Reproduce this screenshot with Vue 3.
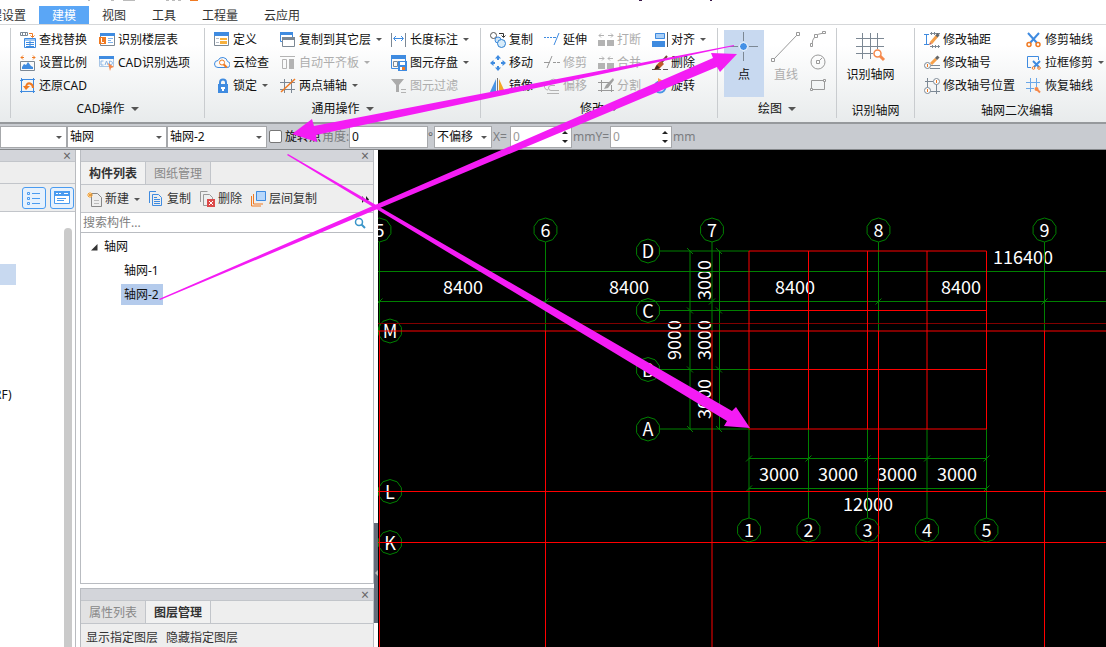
<script setup>
import { ref } from 'vue'

const B = '#3f8be0'
const O = '#f07a22'
const G = '#7c8894'
const D = '#b3b3b3'

const s = (d, c, w = 1) => `<path d="${d}" fill="none" stroke="${c}" stroke-width="${w}"/>`
const f = (d, c) => `<path d="${d}" fill="${c}"/>`

const icons = {
  findReplace:
    s('M.5 .5h7v3h-7zM2.5 .5v3M5.5 .5v3', G) + s('M9 1.5h3.5V5M10.5 3.5l2 2 2-2', O) +
    s('M4.500 6.500h11v9h-11z', B) + f('M5 7h10v2H5z', '#9cc5f2') + s('M6 10.500h8M6 12.500h8M6 14.500h8M10 9v6', B),
  floorTable:
    s('M1.500 1.500h14v12h-14z', G) + f('M1 1h15v3H1z', B) + f('M0 5h7v7H0z', O) + s('M2.500 6v4.500H5', '#fff') +
    s('M9 6.500h5M9 8.500h3M9 10.500h5', '#7fb2ec'),
  scale:
    s('M4 2.500H1M12 2.500h3M3 .5l-2 2 2 2M13 .5l2 2-2 2', O) + s('M.5 6.500h14v9H.5z', G) +
    f('M2 14v-2l2-3 2 1 2-3 3 4 2 1v2z', B),
  cadOption:
    s('M.5 1.500h14v10H.5z', '#a9c6e6') + f('M0 1h15v3H0z', B) +
    s('M4.500 6H2v4h2.500M6 10l1.500-4L9 10M10.500 6v4q3 0 3-2t-3-2', '#8ab5e6') + f('M9 8l6 4-3 1-1 3z', '#f5884a'),
  restoreCad:
    s('M1.500 1.500h12v12h-12z', B) + s('M0 2.500h3M1.500 0v3M13.500 0v3M12 1.500h3M0 13.500h3M1.500 12v3M15 13.500h-3M13.500 12v3', B) +
    s('M6 10C6 6 8 5 10 5.500q3 1 3 4.500', O, 2) + f('M3 8h7l-4 4z', O),
  define:
    s('M.5 1.500h14v12H.5z', G) + f('M0 0h15v4H0z', B) + s('M2 6.500h3M2 10.500h3M7 10.500h6', '#b5bcc5') + f('M6 6h7v6H6z', '#f7b03c') + s('M6 8.500h7', '#fff'),
  cloudCheck:
    s('M4 12.500a3.500 3.500 0 0 1 0-7 5 5 0 0 1 9.500 1 3 3 0 0 1-1 6z', B) + '<circle cx="8" cy="7.500" r="2.500" fill="#fff" stroke="#f07a22"/>' + s('M9.800 9.500l3 3', O, 2),
  lock:
    s('M6 7V4.500a3 3 0 0 1 6 0V7', B, 2) + f('M4 6h10v9H4z', B) + f('M8 9h2v4H8zM7 9h4v2H7z', '#fff'),
  copyFloor:
    s('M.5 .5h12v9H.5z', B) + f('M0 0h13v3H0z', B) + f('M2 5h14v10H2z', '#fff') + s('M2.500 5.500h12v9h-12z', G) + f('M2 5h13v3H2z', G),
  alignSlab: s('M0 1.500h15M2.500 4.500h4v9h-4z', D) + f('M9 4h5v10H9z', D),
  twoPoint: s('M4.500 1v14M11.500 1v14M0 4.500h15M0 11.500h15', G) + s('M1 14L15 1', O, 1.5),
  length: s('M.5 1v14M14.500 1v14', G) + s('M3 6.500h9M5 4L2.500 6.500 5 9M10 4l2.500 2.500L10 9', B),
  saveEl:
    s('M.5 1.500h14v12H.5z', B) + f('M0 0h15v4H0z', B) + s('M2.500 6.500h4v5h-4z', G) + f('M7 6h9v10H7z', B) + f('M9 7h5v3H9z', '#fff') + f('M9 12h5v3H9z', '#fff') + f('M11 12h3v3h-3z', O),
  filter: f('M0 1h13L8 7v7H5V7z', '#ababab') + s('M10 11.500h5M10 14.500h5', D),
  copy:
    '<circle cx="3.500" cy="3.500" r="3" fill="#fff" stroke="#555"/><circle cx="8" cy="8" r="3" fill="#cfe6f7" stroke="#3f8be0"/><circle cx="11.500" cy="11.500" r="4" fill="#d8ecfa" stroke="#2c7fd0"/>' +
    s('M9 1.500h4.500V5M11.500 3.500l2 2 2-2', '#333'),
  move:
    s('M8 1v4M8 11v4M1 8h4M11 8h4', B, 2) + f('M8 0l3 3.500H5zM8 16l3-3.500H5zM0 8l3.500-3v6zM16 8l-3.500-3v6z', B),
  mirror: f('M6 1v13H0z', '#4a94e4') + f('M9 1v13h6z', '#f5a623') + s('M7.500 0v16', '#777'),
  extend: s('M0 5.500h8', B).replace('/>', ' stroke-dasharray="2 1"/>') + s('M9 5.500h3M10 13L15 1', B),
  trim: s('M0 7.500h6M3 13L8 1', '#999') + s('M9 7.500h7', '#999').replace('/>', ' stroke-dasharray="3 1"/>'),
  offset: s('M4 12a4 4 0 0 1 1-8 5 5 0 0 1 9 0', D) + s('M7 12.500a2.500 2.500 0 0 1 0-5h4M3 15.500h12M7 12.500h8', D),
  breakIt: f('M0 8h7v6H0zM9 8h7v6H9z', D) + s('M1 3.500h5M3 1.500l-2 2 2 2M10 3.500h5M13 1.500l2 2-2 2', D),
  merge: f('M0 8h7v6H0zM9 8h7v6H9z', D) + s('M1 3.500h5M4 1.500l2 2-2 2M10 3.500h5M12 1.500l-2 2 2 2', D),
  split: s('M0 4.500h12M3.500 2v12M0 12.500h16M13.500 7v7', '#999') + f('M15 0l1 2-6 8-4 1 2-4z', '#a0a0a0'),
  align: f('M3 1h10v6H3z', '#a9cff7') + s('M3.500 1.500h9v5h-9z', B) + f('M0 9h13v6H0z', '#3f8be0') + s('M15.500 0v15', '#555'),
  del: s('M0 14.500h9M11 14.500h5', '#555') + s('M15 1L9 8', '#6b4a32', 2) + f('M9 6l3 3-5 5-5 1q2-6 7-9z', '#c05a28') + f('M5 10l3 3-6 2z', '#3b2a20'),
  rotate: '<circle cx="8" cy="9" r="5.500" fill="none" stroke="#4a94e4" stroke-width="2"/>' + f('M6 0l7 4-7 4z', '#f5a04a'),
  editDist:
    s('M2.500 3v9M0 2.500h5M0 12.500h5', B) + s('M6 1.500h10M6 14.500h10M7.500 0v3M10.500 0v3M8.500 13v3M11.500 13v3M14.500 13v3', G) + s('M7 11l6-7', '#f5a04a', 3) + s('M12.500 4.500l2-2.500', '#666', 3) + f('M5 13l1-3 2 2z', '#c65'),
  editNo:
    '<circle cx="3.500" cy="10.500" r="3" fill="none" stroke="#7c8894"/>' + s('M3.500 9v3', O) + s('M7 10.500h9M6 13.500h10', G) + s('M7 9l5-5', '#f5a04a', 3) + s('M12 4l2.500-2.500', '#666', 3),
  editPos:
    s('M3.500 0v10M1 3.500h8M12.500 6v10M6 13.500h10', G) + '<circle cx="12.500" cy="3.500" r="3" fill="#fff" stroke="#7c8894"/><circle cx="3.500" cy="12.500" r="3" fill="#fff" stroke="#7c8894"/>' + s('M12.500 2v3M3.500 11v3', O),
  scissors:
    s('M2 1l9 10M13 1L4 11', B, 2) + '<circle cx="3" cy="12.500" r="2" fill="none" stroke="#f07a22" stroke-width="1.500"/><circle cx="12" cy="12.500" r="2" fill="none" stroke="#f07a22" stroke-width="1.500"/>',
  boxTrim:
    s('M5 12.500H1.500v-11h11V5', B) + s('M7 6l6 6M14 6l-6 6', B, 2) + '<circle cx="7.500" cy="13" r="1.300" fill="none" stroke="#f07a22"/><circle cx="13" cy="13" r="1.300" fill="none" stroke="#f07a22"/>',
  restoreAxis: s('M4.500 0v14M10.500 0v9M0 4.500h14M0 10.500h8', '#6aa7e8') + '<circle cx="10.500" cy="11" r="2" fill="#f5884a"/>' + s('M11 11.500l3 3', '#f5884a', 2),
  newDoc: s('M4.500 2.500h6l4 4v9h-10z', '#888') + s('M7 9.500h5M7 12.500h5', '#bbb') + s('M0 4h6M3 1v6M1 2l4 4M5 2L1 6', '#f5a030'),
  copyDoc: s('M.5 12V.5H7', B) + s('M3.500 3.500h6l3 3v8h-9z', B) + s('M5 8.500h6M5 10.500h6M5 12.500h6M5 6.500h3', B),
  delDoc: s('M.5 11V.5h7', '#999') + s('M3.500 3.500h6l3 3v8h-9z', '#999') + f('M7 8h8v8H7z', '#dc4a4a') + s('M9 10l4 4M13 10l-4 4', '#fff'),
  layerCopy: s('M.5 5v10H10M2.500 3v10H12', O) + f('M5 0h10v10H5z', '#b7d7fb') + s('M5.500 .5h9v9h-9z', B),
}

const tabs = ['工程设置', '建模', '视图', '工具', '工程量', '云应用']

const groups = [
  { name: 'CAD操作', key: 'cad', caret: true, cols: [
    [['findReplace', '查找替换'], ['scale', '设置比例'], ['restoreCad', '还原CAD']],
    [['floorTable', '识别楼层表'], ['cadOption', 'CAD识别选项']],
  ] },
  { name: '通用操作', key: 'common', caret: true, cols: [
    [['define', '定义'], ['cloudCheck', '云检查'], ['lock', '锁定', 'c']],
    [['copyFloor', '复制到其它层', 'c'], ['alignSlab', '自动平齐板', 'cd'], ['twoPoint', '两点辅轴', 'c']],
    [['length', '长度标注', 'c'], ['saveEl', '图元存盘', 'c'], ['filter', '图元过滤', 'd']],
  ] },
  { name: '修改', key: 'modify', caret: true, cols: [
    [['copy', '复制'], ['move', '移动'], ['mirror', '镜像']],
    [['extend', '延伸'], ['trim', '修剪', 'd'], ['offset', '偏移', 'd']],
    [['breakIt', '打断', 'd'], ['merge', '合并', 'd'], ['split', '分割', 'd']],
    [['align', '对齐', 'c'], ['del', '删除'], ['rotate', '旋转']],
  ] },
  { name: '绘图', key: 'draw', caret: true },
  { name: '识别轴网', key: 'recognize' },
  { name: '轴网二次编辑', key: 'axis', cols: [
    [['editDist', '修改轴距'], ['editNo', '修改轴号'], ['editPos', '修改轴号位置']],
    [['scissors', '修剪轴线'], ['boxTrim', '拉框修剪', 'c'], ['restoreAxis', '恢复轴线']],
  ] },
]
const has = (item, flag) => (item[2] || '').includes(flag)

const tools = [['newDoc', '新建', 'c'], ['copyDoc', '复制'], ['delDoc', '删除'], ['layerCopy', '层间复制']]

const rotated = ref(false)
const angle = ref('0')
const dx = ref('0')
const dy = ref('0')
const query = ref('')

/* drawing */
const ring = (cx, cy) =>
  Array.from({ length: 10 }, (_, i) => {
    const a = (Math.PI / 5) * i - Math.PI / 2
    return `${(cx + 12 * Math.cos(a)).toFixed(1)},${(cy + 12 * Math.sin(a)).toFixed(1)}`
  }).join(' ')

const mainX = [379.5, 545.5, 712, 878.5, 1044.5]
const subX = [749, 808.5, 867.5, 927, 986.5]
const subY = [251, 310.5, 369.5, 429]
const bubbles = [
  ...mainX.map((x, i) => ({ x, y: 230, t: String(i + 5) })),
  ...subY.map((y, i) => ({ x: 648, y, t: 'DCBA'[i] })),
  ...subX.map((x, i) => ({ x, y: 530, t: String(i + 1) })),
  { x: 390, y: 331, t: 'M' }, { x: 390, y: 491.5, t: 'L' }, { x: 390, y: 542.5, t: 'K' },
]
const dims = [
  ...[463, 629, 795, 961].map((x) => ({ x, y: 287, t: '8400' })),
  ...[779, 838, 897, 957].map((x) => ({ x, y: 474, t: '3000' })),
  { x: 868, y: 504, t: '12000' }, { x: 1023, y: 257, t: '116400' },
]
const vdims = [
  { x: 705, y: 280, t: '3000' }, { x: 705, y: 340, t: '3000' }, { x: 705, y: 399, t: '3000' }, { x: 675, y: 340, t: '9000' },
]
</script>

<template>
  <div class="app">
    <header>
      <nav class="tabs">
        <button v-for="t in tabs" :key="t" type="button" :class="{ on: t === '建模' }">{{ t }}</button>
        <svg class="title-scraps" width="640" height="3" aria-hidden="true">
          <path d="M0 0h2M23 0h3M35 0h12M78 0h3M84 0h3M90 0h3" stroke="#bbb" stroke-width="2" />
          <path d="M102 0h8" stroke="#f07a22" stroke-width="2" />
          <path d="M551 0h3M622 0h2" stroke="#3b1a4a" stroke-width="2" />
        </svg>
      </nav>
      <div class="ribbon">
        <section v-for="g in groups" :key="g.key" class="group" :class="g.key">
          <div class="group-body">
            <template v-if="g.cols">
              <div v-for="(col, i) in g.cols" :key="i" class="col">
                <button v-for="it in col" :key="it[1]" type="button" class="tool" :disabled="has(it, 'd')">
                  <svg width="16" height="16" aria-hidden="true" v-html="icons[it[0]]"></svg>
                  <span>{{ it[1] }}</span>
                  <i v-if="has(it, 'c')" class="caret"></i>
                </button>
              </div>
            </template>
            <template v-else-if="g.key === 'draw'">
              <button type="button" class="big active">
                <svg width="30" height="30" aria-hidden="true">
                  <path d="M14.500 0v9M14.500 20v9M0 14.500h9M20 14.500h9" stroke="#7c8894" />
                  <circle cx="14.500" cy="14.500" r="4" fill="#4390e6" stroke="#fff" stroke-width="1" />
                </svg>
                <span>点</span>
              </button>
              <button type="button" class="big" disabled>
                <svg width="30" height="30" aria-hidden="true">
                  <path d="M3 27L26 3" stroke="#999" />
                  <path d="M.5 26.500h3v3h-3zM25.500 .5h3v3h-3z" fill="#fff" stroke="#999" />
                </svg>
                <span>直线</span>
              </button>
              <div class="shapes">
                <button type="button" aria-label="弧线" disabled>
                  <svg width="16" height="16"><path d="M2 14Q2 3 14 2" fill="none" stroke="#999" /><path d="M.5 12.500h2v3h-2zM4.500 3.500h3v3h-3zM12.500 .5h3v2h-3z" fill="#fff" stroke="#999" /></svg>
                </button>
                <button type="button" aria-label="圆" disabled>
                  <svg width="16" height="16"><circle cx="8" cy="8" r="7" fill="none" stroke="#999" /><path d="M8 8l4-4" stroke="#999" /><path d="M6.500 6.500h3v3h-3z" fill="#fff" stroke="#999" /></svg>
                </button>
                <button type="button" aria-label="矩形" disabled>
                  <svg width="16" height="16"><path d="M1.500 3.500h13v9h-13z" fill="none" stroke="#999" /><path d="M.5 11.500h2v2h-2zM13.500 2.500h2v2h-2z" fill="#fff" stroke="#999" /></svg>
                </button>
              </div>
            </template>
            <button v-else type="button" class="big">
              <svg width="30" height="30" aria-hidden="true">
                <path d="M6.500 1v26M14.500 1v26M21.500 1v16M0 6.500h28M0 14.500h28M0 21.500h17" stroke="#7c8894" />
                <circle cx="21.500" cy="21.500" r="3.500" fill="#fff" stroke="#f5884a" stroke-width="1.500" />
                <path d="M24 24l4 4" stroke="#f5884a" stroke-width="3" />
              </svg>
              <span>识别轴网</span>
            </button>
          </div>
          <button type="button" class="group-name">{{ g.name }}<i v-if="g.caret" class="caret large"></i></button>
        </section>
      </div>
    </header>

    <form class="options" @submit.prevent>
      <label class="pick first"><select aria-label="构件类型"><option></option></select><i class="caret"></i></label>
      <label class="pick"><select aria-label="类别"><option>轴网</option></select><i class="caret"></i></label>
      <label class="pick"><select aria-label="构件"><option>轴网-2</option></select><i class="caret"></i></label>
      <label class="check"><input v-model="rotated" type="checkbox" />旋转点</label>
      <label class="field for-angle" for="angle">角度:</label>
      <input id="angle" v-model="angle" class="angle" type="text" />
      <span class="degree">°</span>
      <label class="pick small"><select aria-label="偏移方式"><option>不偏移</option></select><i class="caret"></i></label>
      <label class="field for-x" for="dx">X=</label>
      <span class="spin"><input id="dx" v-model="dx" type="text" disabled /><span><i></i><i></i></span></span>
      <label class="field for-y" for="dy">mmY=</label>
      <span class="spin"><input id="dy" v-model="dy" type="text" disabled /><span><i></i><i></i></span></span>
      <span class="field">mm</span>
    </form>

    <main>
      <aside class="nav-pane">
        <div class="bar"><button type="button" aria-label="关闭">×</button></div>
        <div class="nav-gap"></div>
        <div class="nav-tools">
          <button type="button" aria-label="列表">
            <svg width="16" height="16"><path d="M1.500 2.500h2v2h-2zM1.500 7.500h2v2h-2zM1.500 12.500h2v2h-2zM6 3.500h8M6 8.500h8M6 13.500h8" fill="none" stroke="#4a9bf0" /></svg>
          </button>
          <button type="button" aria-label="窗口">
            <svg width="16" height="16"><path d="M.5 1.500h15v12H.5z" fill="#fff" stroke="#4a9bf0" /><path d="M0 1h16v5H0z" fill="#4a9bf0" /><path d="M2 3.500h2M5 3.500h2M10 3.500h4" stroke="#fff" /><path d="M3 8.500h9M3 10.500h7" stroke="#4a9bf0" /></svg>
          </button>
        </div>
        <div class="nav-body">
          <div class="nav-list"><div class="nav-sel"></div><span>RF)</span></div>
          <div class="scroll"></div>
        </div>
      </aside>

      <div class="docks">
        <section class="dock list">
          <div class="bar"><button type="button" aria-label="关闭">×</button></div>
          <div class="dock-tabs"><button type="button" class="on">构件列表</button><button type="button">图纸管理</button></div>
          <div class="dock-tools">
            <button v-for="t in tools" :key="t[1]" type="button">
              <svg width="16" height="16" aria-hidden="true" v-html="icons[t[0]]"></svg>{{ t[1] }}<i v-if="t[2]" class="caret"></i>
            </button>
            <svg class="more" width="8" height="7" aria-hidden="true"><path d="M0 0l3 3.500L0 7zM4 0l3 3.500L4 7z" fill="#222" /></svg>
          </div>
          <label class="search">
            <input v-model="query" type="text" placeholder="搜索构件..." aria-label="搜索构件" />
            <svg width="12" height="12" aria-hidden="true"><circle cx="5" cy="5" r="3.500" fill="none" stroke="#3a95c9" stroke-width="1.500" /><path d="M7.500 7.500L11 11" stroke="#3a95c9" stroke-width="2" /></svg>
          </label>
          <ul class="tree">
            <li><svg width="7" height="7" aria-hidden="true"><path d="M6.500 0v6.500H0z" fill="#333" /></svg>轴网
              <ul><li><span>轴网-1</span></li><li><span class="sel">轴网-2</span></li></ul>
            </li>
          </ul>
        </section>
        <section class="dock props">
          <div class="bar"><button type="button" aria-label="关闭">×</button></div>
          <div class="dock-tabs"><button type="button">属性列表</button><button type="button" class="on">图层管理</button></div>
          <div class="layer-tools"><button type="button">显示指定图层</button><button type="button">隐藏指定图层</button></div>
        </section>
      </div>

      <div class="splitter"><button type="button" aria-label="折叠"><i></i></button></div>

      <div class="canvas">
        <svg width="100%" height="100%" role="img" aria-label="轴网图">
          <g transform="translate(-378 -150)">
            <g class="text">
              <text v-for="b in bubbles" :key="b.t + b.x" :x="b.x" :y="b.y" dy="7">{{ b.t }}</text>
              <text v-for="d in dims" :key="d.t + d.x" :x="d.x" :y="d.y" dy="7">{{ d.t }}</text>
              <text v-for="d in vdims" :key="d.t + d.y" :transform="`translate(${d.x} ${d.y}) rotate(-90)`" dy="6">{{ d.t }}</text>
            </g>
            <g class="green">
              <polygon v-for="b in bubbles" :key="b.t + b.x" :points="ring(b.x, b.y)" />
              <path d="M378 271.500H3000M378 301.500H3000" />
              <path v-for="x in mainX" :key="x" :d="`M${x} 242V331M${x - 3} 304.500l6-6`" />
              <path v-for="y in subY" :key="y" :d="`M660 ${y}H749M${687} ${y - 3}l6 6M716 ${y - 3}l6 6`" />
              <path d="M690 251V429M719.500 251V429M749 458.500H986.500M749 488.500H986.500" />
              <path v-for="x in subX" :key="x" :d="`M${x} 429V518M${x - 3} 461.500l6-6`" />
              <path d="M746 491.500l6-6M983.500 491.500l6-6" />
            </g>
            <g class="red">
              <path class="dim" d="M378 323.500H3000" />
              <path d="M378 331H3000M378 491.500H3000M378 542.500H3000" />
              <path v-for="x in mainX" :key="x" :d="`M${x} 331V3000`" />
              <path v-for="y in subY" :key="y" :d="`M749 ${y}H986.500`" />
              <path v-for="x in subX" :key="x" :d="`M${x} 251V429`" />
            </g>
          </g>
        </svg>
      </div>
    </main>

    <svg class="arrows" aria-hidden="true">
      <polygon points="734,45 734,46 316,135 317,142 292,134 312,119 314,126" />
      <polygon points="160,300 159,299 713,58 711,53 737,54 720,72 717,67" />
      <polygon points="287,155 288,154 732,411 736,407 750,428 724,426 727,421" />
    </svg>
  </div>
</template>

<style>
body { margin: 0; overflow: hidden; }
</style>

<style scoped>
.app {
  position: relative;
  display: flex;
  flex-direction: column;
  height: 100vh;
  overflow: hidden;
  background: #fff;
  color: #111;
  font: 12px/18px "Noto Sans", "Noto Sans CJK SC", sans-serif;
}
* { box-sizing: border-box; }
button, input, select { font: inherit; color: inherit; margin: 0; padding: 0; border: 0; background: none; border-radius: 0; }
button { white-space: nowrap; }
svg { display: block; flex: none; }
.caret {
  display: block;
  flex: none;
  width: 0;
  height: 0;
  margin-left: 6px;
  border: 3px solid transparent;
  border-top-color: #555;
  border-bottom: 0;
}
.caret.large { border-width: 4px 4px 0; }

header { flex: none; }
.tabs { position: relative; display: flex; height: 24px; padding-top: 6px; margin-left: -35px; color: #333; }
.tabs button { padding: 1px 13px 0; flex: none; }
.tabs .on { background: #5aa6f6; color: #fff; }
.title-scraps { position: absolute; left: 123px; top: 0; }

.ribbon {
  display: flex;
  height: 100px;
  padding: 3px 0 4px 10px;
  border-top: 1px solid #d5d7d9;
  border-bottom: 2px solid #96999c;
  background: linear-gradient(#fff 20%, #e8ebec);
  overflow: hidden;
}
.group { display: flex; flex-direction: column; flex: none; border-left: 1px solid #c9cccf; }
.group-body { display: flex; flex: none; height: 71px; padding-left: 9px; }
.col { display: flex; flex-direction: column; flex: none; }
.tool { display: flex; align-items: center; height: 23px; gap: 3px; }
.tool .caret { margin-left: 2px; }
.tool:disabled { color: #adadad; }
.tool:disabled .caret { border-top-color: #adadad; }
.group-name { display: flex; flex: none; align-items: center; justify-content: center; height: 20px; }
.cad { width: 194px; }
.cad .col:first-child { width: 79px; }
.common { width: 276px; }
.common .col { width: 111px; }
.common .col:first-child { width: 66px; }
.modify { width: 237px; }
.modify .col { width: 54px; }
.draw { width: 119px; }
.recognize { width: 78px; }
.axis { flex: 1 0 191px; }
.axis .col:first-child { width: 102px; }
.axis .group-name { width: 204px; }
.recognize .group-name { height: 23px; }
.axis .group-name { height: 23px; }
.draw .group-body { padding-left: 6px; }
.recognize .group-body { padding-left: 0; justify-content: center; }
.big { display: flex; flex-direction: column; align-items: center; width: 40px; height: 67px; margin-top: 2px; padding-top: 2px; gap: 4px; }
.recognize .big { width: 68px; margin-right: 10px; }
.big:disabled { width: 44px; color: #adadad; }
.big.active { background: #c8d9f0; }
.shapes { display: flex; flex-direction: column; gap: 7px; padding: 3px 0 0 2px; }

.options {
  display: flex;
  align-items: center;
  flex: none;
  height: 26px;
  border-bottom: 1px solid #85888b;
  background: #c8cbd0;
  white-space: nowrap;
}
.pick { position: relative; display: block; flex: none; width: 100px; height: 22px; }
.pick.first { width: 67px; }
.pick.small { width: 58px; }
.pick select { appearance: none; width: 100%; height: 100%; padding: 0 2px; border: 1px solid #a6a8ab; background: #fff; }
.pick .caret { position: absolute; right: 5px; top: 10px; pointer-events: none; }
.check { display: flex; align-items: center; gap: 3px; width: 55px; padding-left: 2px; }
.check input { appearance: none; width: 13px; height: 13px; border: 1px solid #777; border-radius: 2px; background: #fff; }
.field { padding-left: 1px; color: #7b7d80; }
.for-angle { width: 27px; padding: 0; }
.for-x { width: 18px; }
.for-y { width: 38px; }
.angle { width: 79px; height: 22px; padding: 0 2px; border: 1px solid #a6a8ab; background: #fff; }
.degree { width: 6px; color: #666; }
.spin { display: flex; width: 62px; height: 22px; border: 1px solid #a6a8ab; background: #fff; }
.spin input { width: 51px; padding: 0 2px; color: #999; }
.spin > span { display: flex; flex-direction: column; justify-content: center; gap: 6px; }
.spin i { border: 3px solid transparent; border-top: 0; border-bottom-color: #222; }
.spin i + i { border: 3px solid transparent; border-bottom: 0; border-top-color: #222; }

main { display: flex; flex: 1; min-height: 0; }
.bar { display: flex; justify-content: flex-end; height: 12px; padding-right: 3px; background: #d3d5da; border-bottom: 1px solid #c2c5ca; }
.bar button { width: 10px; color: #666; font-size: 14px; line-height: 12px; }
.nav-pane { display: flex; flex-direction: column; width: 76px; flex: none; border-right: 1px solid #b9bbbf; }
.nav-gap { height: 22px; background: #eee; border-bottom: 1px solid #c2c5ca; }
.nav-tools { display: flex; justify-content: flex-end; align-items: center; gap: 4px; height: 28px; padding-right: 1px; background: #eee; border-bottom: 1px solid #c2c5ca; }
.nav-tools button { display: grid; place-items: center; width: 24px; height: 22px; border: 1px solid #4a9bf0; border-radius: 3px; background: #e6f1fd; }
.nav-body { display: flex; flex: 1; gap: 4px; }
.nav-list { flex: 1; padding-top: 52px; }
.nav-list span { margin-left: -6px; }
.nav-sel { width: 16px; height: 21px; margin-bottom: 101px; background: #c8d9f0; }
.scroll { width: 8px; margin: 16px 3px 0 0; border-radius: 4px 4px 0 0; background: #cacaca; }

.docks { display: flex; flex-direction: column; width: 294px; margin-left: 4px; flex: none; }
.dock { border: solid #b9bcc1; border-width: 0 1px; }
.dock.list { display: flex; flex-direction: column; flex: 1; border-bottom-width: 1px; }
.dock.props { height: 59px; margin-top: 4px; border-top-width: 1px; background: #eee; }
.dock-tabs { display: flex; height: 23px; background: #eee; border-bottom: 1px solid #c2c5ca; }
.dock-tabs button { width: 65px; padding-top: 1px; border-right: 1px solid #c2c5ca; background: #e2e2e3; color: #888; }
.dock-tabs .on { background: #f1f1f1; color: #333; font-weight: 700; }
.dock-tools { display: flex; align-items: center; height: 28px; padding: 1px 3px 0 6px; gap: 9px; background: #eee; border-bottom: 1px solid #c2c5ca; color: #333; }
.dock-tools button { display: flex; align-items: center; gap: 2px; }
.dock-tools .caret { margin-left: 3px; }
.more { margin-left: auto; }
.search { display: flex; align-items: center; height: 20px; padding: 0 7px 0 2px; border-bottom: 1px solid #b9bcc1; }
.search input { flex: 1; min-width: 0; outline: 0; }
.search input::placeholder { color: #808080; opacity: 1; }
.tree, .tree ul { margin: 0; padding: 0; list-style: none; line-height: 24px; }
.tree { padding: 2px 0 0 10px; flex: 1; }
.tree svg { display: inline-block; margin-right: 6px; }
.tree ul { padding-left: 30px; }
.tree li span { display: inline-block; padding: 0 4px 0 3px; line-height: 21px; }
.tree .sel { background: #b4cbec; }
.layer-tools { display: flex; gap: 8px; padding: 5px; color: #333; }
.splitter { display: flex; flex-direction: column; justify-content: flex-end; width: 4px; flex: none; padding-bottom: 24px; }
.splitter button { display: flex; align-items: center; justify-content: center; height: 100px; width: 4px; background: #646e7b; }
.splitter i { border: 3px solid transparent; border-left: 0; border-right-color: #bbb; }

.canvas { flex: 1; min-width: 0; background: #000; overflow: hidden; }
.text text { fill: #fff; font: 18px "Noto Sans CJK SC", sans-serif; text-anchor: middle; }
.green * { fill: none; stroke: #008000; }
.red * { fill: none; stroke: #f00; }
.red .dim { stroke: #800000; }
.arrows { position: absolute; left: 0; top: 0; width: 100%; height: 100%; pointer-events: none; }
.arrows polygon { fill: #f41cf4; }
</style>
